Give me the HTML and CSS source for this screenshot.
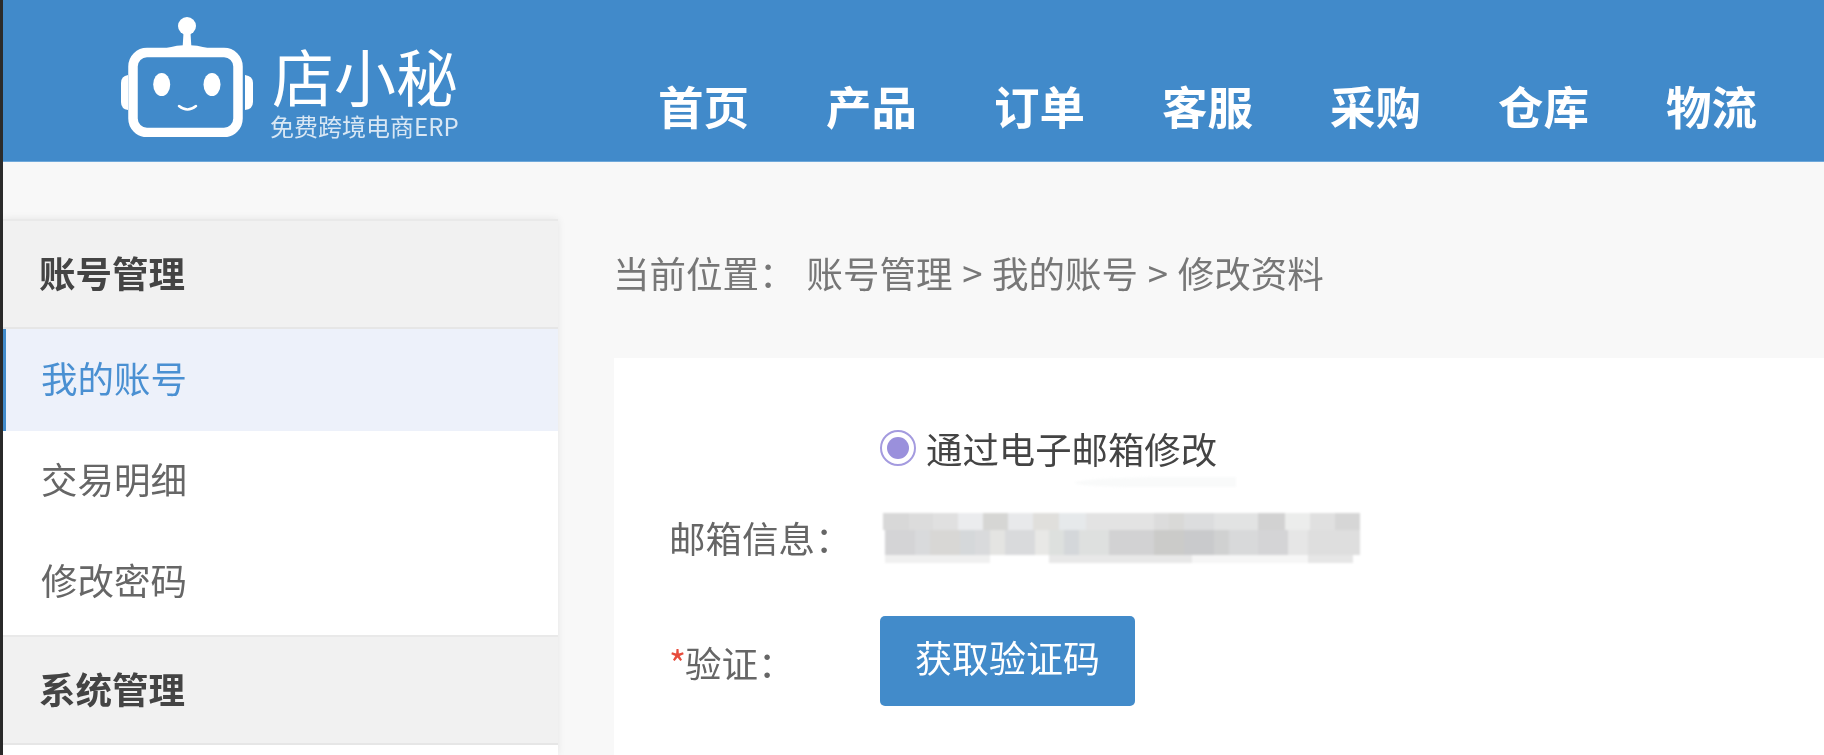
FILE: index.html
```html
<!DOCTYPE html>
<html lang="zh-CN">
<head>
<meta charset="utf-8">
<title>修改资料</title>
<link rel="stylesheet" href="styles.css">
</head>
<body>
<div class="page">
  <header class="topbar">
    <div class="logo">
      <svg class="robot" viewBox="0 0 132 120" width="132" height="120" aria-hidden="true">
        <circle cx="66" cy="9" r="9" fill="#fff"/>
        <path d="M62.5 16h7l1 16h-9z" fill="#fff"/>
        <path d="M46 32q20-6 40 0z" fill="#fff" stroke="#fff" stroke-width="2"/>
        <rect x="12" y="35.5" width="105" height="80" rx="14" fill="none" stroke="#fff" stroke-width="9.5"/>
        <path d="M7 58q-7 1-7 8v19q0 7 7 8z" fill="#fff"/>
        <path d="M124 58q8 1 8 8v19q0 7-8 8z" fill="#fff"/>
        <ellipse cx="40.7" cy="67.5" rx="8.5" ry="11.5" fill="#fff"/>
        <ellipse cx="91" cy="67.5" rx="8.5" ry="11.5" fill="#fff"/>
        <path d="M58 89q8.500 7 17 0" fill="none" stroke="#fff" stroke-width="2.5" stroke-linecap="round"/>
      </svg>
      <div class="brand">
        <div class="brand-name">店小秘</div>
        <div class="brand-sub">免费跨境电商ERP</div>
      </div>
    </div>
    <nav class="nav">
      <a class="nav-item">首页</a>
      <a class="nav-item">产品</a>
      <a class="nav-item">订单</a>
      <a class="nav-item">客服</a>
      <a class="nav-item">采购</a>
      <a class="nav-item">仓库</a>
      <a class="nav-item">物流</a>
    </nav>
  </header>
  <div class="main">
    <aside class="sidebar">
      <div class="side-head">账号管理</div>
      <div class="side-group">
        <a class="side-item is-active">我的账号</a>
        <a class="side-item">交易明细</a>
        <a class="side-item">修改密码</a>
      </div>
      <div class="side-head">系统管理</div>
      <div class="side-rest"></div>
    </aside>
    <section class="content">
      <div class="crumbs"><span class="crumbs-label">当前位置：</span><span class="crumbs-path">账号管理 &gt; 我的账号 &gt; 修改资料</span></div>
      <div class="panel">
        <div class="row row-radio">
          <span class="label"></span>
          <span class="radio"><span class="radio-dot"></span></span>
          <span class="radio-text">通过电子邮箱修改</span>
        </div>
        <div class="row row-email">
          <span class="label">邮箱信息：</span>
          <span class="mosaic">
            <span class="strip strip-a"></span>
            <span class="strip strip-b"></span>
            <span class="strip strip-c"></span>
          </span>
        </div>
        <div class="row row-verify">
          <span class="label label-verify"><span class="star">*</span>验证：</span>
          <button class="btn">获取验证码</button>
        </div>
      </div>
    </section>
  </div>
</div>
</body>
</html>
```
FILE: styles.css
```css
* { box-sizing: border-box; }
html, body { margin: 0; height: 100%; overflow: hidden; background: #2b2b2b; }
body { font-family: "Noto Sans CJK SC", "Liberation Sans", sans-serif; }
.page { margin-left: 3px; height: 755px; background: #f8f8f8; display: flex; flex-direction: column; filter: blur(.6px); }
.topbar { height: 162px; background: #418aca; border-bottom: 1px solid #6ea8da; display: flex; flex: none; padding-left: 118px; }
.logo { display: flex; padding-top: 17px; gap: 19px; width: 537px; flex: none; }
.robot { flex: none; }
.brand { color: #fff; padding-top: 26px; }
.brand-name { font-size: 62px; font-weight: 400; line-height: 64px; }
.brand-sub { font-size: 24px; line-height: 28px; margin: 5px 0 0 -2px; opacity: .8; white-space: nowrap; }
.nav { display: flex; gap: 77px; padding-top: 75px; }
.nav-item { color: #fff; font-size: 45.5px; font-weight: 700; line-height: 60px; }
.main { flex: 1; display: flex; padding-top: 57px; min-height: 0; }
.sidebar { width: 555px; flex: none; background: #fff; box-shadow: 0 0 8px rgba(0,0,0,.08); display: flex; flex-direction: column; }
.side-head { height: 110px; flex: none; background: #f1f1f1; border-top: 2px solid #e9e9e9; border-bottom: 2px solid #e6e6e6; padding-left: 36px; font-size: 36.5px; font-weight: 700; color: #444; line-height: 104px; }
.side-group { flex: none; padding-bottom: 2px; }
.side-item { display: block; height: 101px; padding-left: 38px; font-size: 36.5px; color: #666; line-height: 96px; }
.side-item.is-active { height: 102px; background: #edf1fa; color: #4a90d2; border-left: 3px solid #428bca; padding-left: 35px; line-height: 98px; }
.side-rest { flex: 1; }
.content { flex: 1; padding-left: 56px; display: flex; flex-direction: column; min-width: 0; }
.crumbs { flex: none; height: 139px; font-size: 36.5px; line-height: 108px; color: #777; white-space: nowrap; }
.crumbs-label { margin: 0 11px 0 -1px; }
.crumbs-path { word-spacing: 1.5px; }
.panel { flex: 1; background: #fff; padding: 60px 0 0 55px; }
.row { display: flex; align-items: center; }
.label { width: 211px; flex: none; font-size: 36.5px; color: #666; line-height: 50px; }
.row-radio { height: 60px; }
.radio { width: 36px; height: 36px; border-radius: 50%; border: 2px solid #a49bdf; background: #fff; display: flex; align-items: center; justify-content: center; flex: none; }
.radio-dot { width: 22px; height: 22px; border-radius: 50%; background: #9a90dc; }
.radio-text { margin-left: 10px; font-size: 36.4px; color: #444; white-space: nowrap; }
.row-email { margin-top: 35px; height: 50px; }
.mosaic { position: relative; display: block; width: 477px; height: 50px; margin-left: 3px; filter: blur(.8px); }
.mosaic::before { content: ""; position: absolute; left: 192px; top: -36px; width: 161px; height: 10px; background: #f9fafa; border-radius: 60% 0 0 40%; }
.strip { display: block; }
.strip-a { height: 17px; background: linear-gradient(90deg,
  #d8d8d8 0 26px, #dcdcdc 26px 50px, #e0e0e0 50px 75px, #ebecee 75px 100px, #d6d6d4 100px 125px,
  #e8e9eb 125px 150px, #e0dfdc 150px 176px, #e6e9eb 176px 203px, #e3e3e3 203px 271px, #dcdcdc 271px 286px,
  #d9d9d7 286px 301px, #dcddde 301px 331px, #e2e3e3 331px 375px, #d2d2d2 375px 402px, #ecedec 402px 427px,
  #e0e0e0 427px 452px, #d6d6d6 452px 477px); }
.strip-b { height: 25px; background: linear-gradient(90deg,
  #fff 0 2px, #d4d4d6 2px 32px, #d9dadc 32px 47px, #d8d7d5 47px 77px, #d5d8da 77px 92px, #d9dadc 92px 107px,
  #e4e4e2 107px 122px, #d9dadc 122px 152px, #e8e8e6 152px 166px, #dde0de 166px 181px, #d4d7da 181px 196px,
  #dee0df 196px 226px, #d2d2d3 226px 271px, #cbcbc9 271px 301px, #c9cacc 301px 331px, #d0d1d1 331px 346px,
  #d8d9da 346px 375px, #d4d4d6 375px 405px, #e6e6e6 405px 425px, #dedede 425px 477px); }
.strip-c { height: 8px; background: linear-gradient(90deg,
  #fff 0 2px, #f0f0f0 2px 107px, #fff 107px 166px, #e8e8e8 166px 309px, #f6f6f6 309px 425px, #e6e6e6 425px 470px, #fff 470px 477px); }
.row-verify { margin-top: 53px; height: 90px; }
.label-verify { padding-top: 4px; }
.star { color: #e74c3c; margin-right: -1px; }
.btn { width: 255px; height: 90px; border: 0; border-radius: 5px; background: #428bca; color: #fff; font: inherit; font-size: 37px; padding: 0 0 8px; }
```
